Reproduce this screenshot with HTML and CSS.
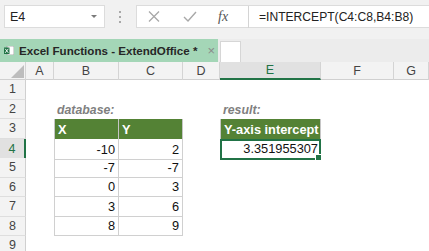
FILE: index.html
```html
<!DOCTYPE html>
<html lang="en">

<head>
    <meta charset="UTF-8" />
    <title>Excel Functions - ExtendOffice</title>
    <link rel="stylesheet" href="styles.css">
</head>

<body>
    <div class="formula-row">
        <div class="name-box">
            <span>E4</span>
            <span class="arrow"></span>
        </div>
        <div class="dots"><i></i><i></i><i></i></div>
        <div class="formula-box">
            <svg class="icon-x" width="12" height="11" viewBox="0 0 12 11">
                <path d="M1 0.5 L11 10.5 M11 0.5 L1 10.5" stroke="#a8a8a8" stroke-width="1.3" fill="none" />
            </svg>
            <svg class="icon-ok" width="14" height="11" viewBox="0 0 14 11">
                <path d="M1 6 L5 10 L13 1" stroke="#a8a8a8" stroke-width="1.4" fill="none" />
            </svg>
            <span class="fx">fx</span>
            <span class="formula">=INTERCEPT(C4:C8,B4:B8)</span>
        </div>
    </div>

    <div class="tab-bar">
        <div class="tab">
            <svg class="tab-icon" width="10" height="9" viewBox="0 0 10 9">
                <rect x="3" y="0" width="7" height="9" fill="#fff" stroke="#9a9a9a" stroke-width="0.8" />
                <rect x="0" y="1.5" width="5.5" height="6.5" fill="#217346" />
                <path d="M1.2 2.8 L4.3 6.8 M4.3 2.8 L1.2 6.8" stroke="#fff" stroke-width="0.9" />
            </svg>
            <span class="tab-title">Excel Functions - ExtendOffice *</span>
            <span class="tab-close">×</span>
        </div>
        <div class="tab-new"></div>
    </div>

    <div class="sheet">
        <div class="row head">
            <div class="corner">
                <svg width="26" height="18" viewBox="0 0 26 18">
                    <polygon points="24,3 24,16 11,16" fill="#bdbdbd" />
                </svg>
            </div>
            <div class="col">A</div>
            <div class="col">B</div>
            <div class="col">C</div>
            <div class="col">D</div>
            <div class="col active">E</div>
            <div class="col">F</div>
            <div class="col">G</div>
        </div>

        <div class="row">
            <div class="num">1</div>
            <div class="c"></div><div class="c"></div><div class="c"></div><div class="c"></div>
            <div class="c"></div><div class="c"></div><div class="c"></div>
        </div>

        <div class="row">
            <div class="num">2</div>
            <div class="c"></div>
            <div class="c label">database:</div>
            <div class="c"></div><div class="c"></div>
            <div class="c label">result:</div>
            <div class="c"></div><div class="c"></div>
        </div>

        <div class="row">
            <div class="num">3</div>
            <div class="c"></div>
            <div class="c th first">X</div>
            <div class="c th">Y</div>
            <div class="c"></div>
            <div class="c th first">Y-axis intercept</div>
            <div class="c"></div><div class="c"></div>
        </div>

        <div class="row">
            <div class="num active">4</div>
            <div class="c"></div>
            <div class="c td first">-10</div>
            <div class="c td">2</div>
            <div class="c"></div>
            <div class="c td selected">3.351955307<span class="handle"></span></div>
            <div class="c"></div><div class="c"></div>
        </div>

        <div class="row">
            <div class="num">5</div>
            <div class="c"></div>
            <div class="c td first">-7</div>
            <div class="c td">-7</div>
            <div class="c"></div><div class="c"></div><div class="c"></div><div class="c"></div>
        </div>

        <div class="row">
            <div class="num">6</div>
            <div class="c"></div>
            <div class="c td first">0</div>
            <div class="c td">3</div>
            <div class="c"></div><div class="c"></div><div class="c"></div><div class="c"></div>
        </div>

        <div class="row">
            <div class="num">7</div>
            <div class="c"></div>
            <div class="c td first">3</div>
            <div class="c td">6</div>
            <div class="c"></div><div class="c"></div><div class="c"></div><div class="c"></div>
        </div>

        <div class="row">
            <div class="num">8</div>
            <div class="c"></div>
            <div class="c td first">8</div>
            <div class="c td">9</div>
            <div class="c"></div><div class="c"></div><div class="c"></div><div class="c"></div>
        </div>

        <div class="row">
            <div class="num">9</div>
            <div class="c"></div><div class="c"></div><div class="c"></div><div class="c"></div>
            <div class="c"></div><div class="c"></div><div class="c"></div>
        </div>
    </div>
</body>

</html>
```

FILE: styles.css
```css
body,
html {
    margin: 0;
    padding: 0;
    font-family: "Liberation Sans", Arial, sans-serif;
    background-color: #fff;
    overflow: hidden;
}

/* formula bar */
.formula-row {
    display: flex;
    align-items: flex-start;
    height: 39px;
    padding: 5px 0 0 4px;
    box-sizing: border-box;
    background-color: #f1f1f1;
}

.name-box {
    width: 101px;
    height: 23px;
    box-sizing: border-box;
    display: flex;
    align-items: center;
    justify-content: space-between;
    padding: 0 7px 0 5px;
    background-color: #fff;
    border: 1px solid #dcdcdc;
    font-size: 12.5px;
    color: #222;
}

.name-box .arrow {
    width: 0;
    height: 0;
    border-left: 3px solid transparent;
    border-right: 3px solid transparent;
    border-top: 3px solid #7a7a7a;
}

.dots {
    display: flex;
    flex-direction: column;
    gap: 3px;
    margin: 6px 15px 0 14px;
}

.dots i {
    width: 2px;
    height: 2px;
    background-color: #a8a8a8;
}

.formula-box {
    flex: 1;
    height: 23px;
    box-sizing: border-box;
    display: flex;
    align-items: center;
    background-color: #fff;
    border: 1px solid #dcdcdc;
    border-right: none;
}

.icon-x {
    margin-left: 11px;
}

.icon-ok {
    margin-left: 23px;
}

.fx {
    width: 30px;
    margin-left: 21px;
    padding-bottom: 1px;
    font-family: "Liberation Serif", "Times New Roman", serif;
    font-style: italic;
    font-size: 14px;
    color: #555;
    border-right: 1px solid #d4d4d4;
    line-height: 21px;
}

.formula {
    margin-left: 10px;
    font-size: 12.1px;
    color: #222;
}

/* sheet tabs */
.tab-bar {
    display: flex;
    align-items: flex-end;
    height: 23px;
    background-color: #ececec;
}

.tab {
    width: 218px;
    height: 23px;
    box-sizing: border-box;
    display: flex;
    align-items: center;
    padding-left: 4px;
    background-color: #a4d6b7;
}

.tab-icon {
    margin-right: 5px;
}

.tab-title {
    font-size: 11.6px;
    font-weight: bold;
    color: #262626;
}

.tab-close {
    margin-left: 10px;
    font-size: 13px;
    color: #8a8a8a;
}

.tab-new {
    width: 21px;
    height: 21px;
    margin-left: 2px;
    background-color: #fff;
    border: 1px solid #d6d6d6;
    border-bottom: none;
    box-sizing: border-box;
}

/* grid */
.row {
    display: grid;
    grid-template-columns: 26px 28px 65px 64px 37px 101px 73px 1fr;
    height: 19.5px;
}

.row.head {
    height: 18px;
    background-color: #f3f3f3;
    border-bottom: 1px solid #d0d0d0;
    box-sizing: border-box;
}

.corner svg {
    display: block;
}

.corner,
.col {
    border-right: 1px solid #d4d4d4;
    box-sizing: border-box;
}

.col {
    display: flex;
    align-items: center;
    justify-content: center;
    font-size: 12.5px;
    color: #444;
}

.col.active {
    background-color: #e1e1e1;
    color: #217346;
    border-bottom: 2px solid #217346;
}

.num {
    display: flex;
    align-items: center;
    justify-content: center;
    background-color: #f3f3f3;
    border-right: 1px solid #d0d0d0;
    border-bottom: 1px solid #dedede;
    box-sizing: border-box;
    font-size: 12.5px;
    color: #444;
}

.num.active {
    background-color: #e1e1e1;
    color: #217346;
    border-right: 2px solid #217346;
}

.c {
    position: relative;
    display: flex;
    align-items: flex-end;
    padding: 0 3px 2px 3px;
    box-sizing: border-box;
    font-size: 12.8px;
    color: #111;
    white-space: nowrap;
}

.label {
    font-style: italic;
    font-weight: bold;
    font-size: 12.3px;
    color: #7f7f7f;
}

.th {
    background-color: #548235;
    color: #fff;
    font-weight: bold;
    border-right: 1px solid #c6c6c6;
}

.th.first {
    border-left: 1px solid #c6c6c6;
}

.td {
    justify-content: flex-end;
    border-right: 1px solid #d0d0d0;
    border-bottom: 1px solid #d0d0d0;
}

.td.first {
    border-left: 1px solid #d0d0d0;
}

.selected {
    border: 2px solid #217346;
    padding-right: 1px;
}

.handle {
    position: absolute;
    right: -3px;
    bottom: -3px;
    width: 5px;
    height: 5px;
    background-color: #217346;
    border: 1px solid #fff;
}
```
